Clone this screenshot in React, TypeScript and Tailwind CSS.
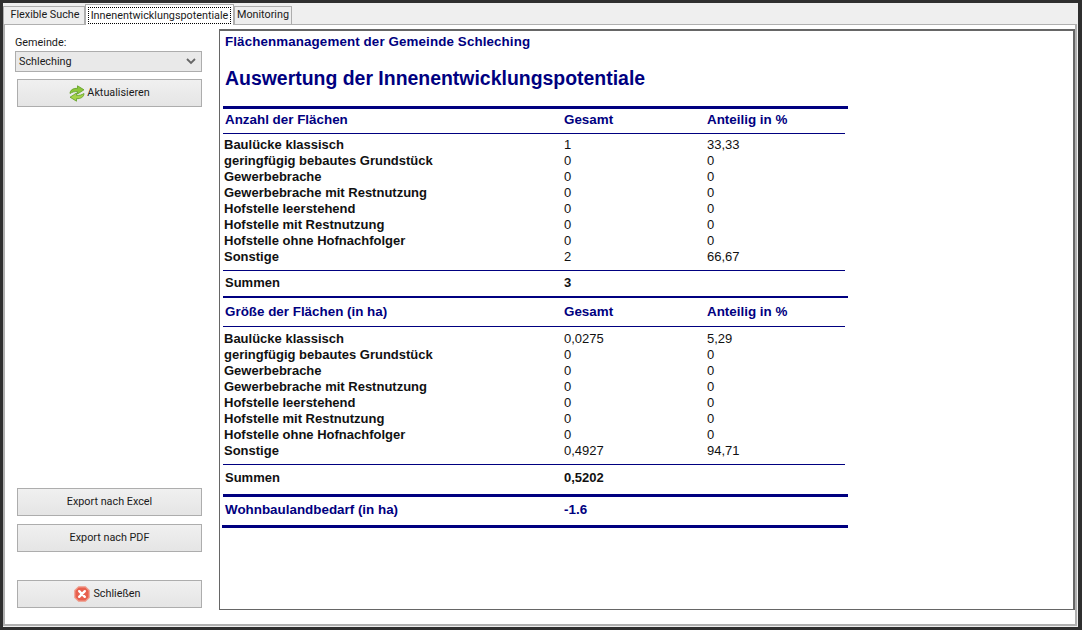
const ROW_LABELS = [
  "Baulücke klassisch",
  "geringfügig bebautes Grundstück",
  "Gewerbebrache",
  "Gewerbebrache mit Restnutzung",
  "Hofstelle leerstehend",
  "Hofstelle mit Restnutzung",
  "Hofstelle ohne Hofnachfolger",
  "Sonstige",
];

const COUNT_VALUES = [
  ["1", "33,33"],
  ["0", "0"],
  ["0", "0"],
  ["0", "0"],
  ["0", "0"],
  ["0", "0"],
  ["0", "0"],
  ["2", "66,67"],
];

const SIZE_VALUES = [
  ["0,0275", "5,29"],
  ["0", "0"],
  ["0", "0"],
  ["0", "0"],
  ["0", "0"],
  ["0", "0"],
  ["0", "0"],
  ["0,4927", "94,71"],
];

function RefreshIcon() {
  return (
    <svg width="16" height="17" viewBox="0 0 16 17" className="shrink-0">
      <path d="M1 8.5 C1 5 4.5 3 8.5 3.4 L8.5 0.8 L15 4.8 L8.5 9 L8.5 6.6 C5.5 6.4 3.5 7 1 8.5 Z" fill="#8cc63a" stroke="#5f9e25" strokeWidth="0.8" strokeLinejoin="round" />
      <path d="M15 8.5 C15 12 11.5 14 7.5 13.6 L7.5 16.2 L1 12.2 L7.5 8 L7.5 10.4 C10.5 10.6 12.5 10 15 8.5 Z" fill="#a5d34a" stroke="#5f9e25" strokeWidth="0.8" strokeLinejoin="round" />
    </svg>
  );
}

function CloseIcon() {
  return (
    <svg width="16" height="16" viewBox="0 0 16 16" className="shrink-0">
      <path d="M4.5 0.8 H11.5 L15.2 4.5 V11.5 L11.5 15.2 H4.5 L0.8 11.5 V4.5 Z" fill="#e8604e" stroke="#f0a090" strokeWidth="1.2" strokeLinejoin="round" />
      <path d="M5.2 5.2 L10.8 10.8 M10.8 5.2 L5.2 10.8" stroke="#ffffff" strokeWidth="2.4" strokeLinecap="round" />
    </svg>
  );
}

function WinButton({ children, className = "" }: { children: React.ReactNode; className?: string }) {
  return (
    <button
      type="button"
      className={`ml-[2px] flex w-[185px] items-center justify-center gap-[2px] border border-[#adadad] bg-gradient-to-b from-[#f0f0f0] to-[#e5e5e5] text-[10.8px] text-[#1a1a1a] ${className}`}
    >
      {children}
    </button>
  );
}

function HeaderRow({ title }: { title: string }) {
  return (
    <div className="grid grid-cols-[339px_143px_1fr] pl-[2px] text-[13.4px] leading-[16px] font-bold text-[#000080]">
      <div>{title}</div>
      <div>Gesamt</div>
      <div>Anteilig in %</div>
    </div>
  );
}

function DataRows({ values }: { values: string[][] }) {
  return (
    <div>
      {ROW_LABELS.map((label, i) => (
        <div key={label} className="grid h-[16px] grid-cols-[340px_143px_1fr] pl-[1px] text-[13px] leading-[16px] text-[#111]">
          <div className="font-bold">{label}</div>
          <div>{values[i][0]}</div>
          <div>{values[i][1]}</div>
        </div>
      ))}
    </div>
  );
}

export default function App() {
  return (
    <div className="h-[630px] w-[1082px] overflow-hidden bg-[#2f2f2f] pt-[3px] pr-[4px] pb-[3px] pl-[3px] font-['Roboto',sans-serif]">
      <div className="flex h-full flex-col bg-[#efefef] pr-px pb-px">
        {/* tab strip */}
        <div className="flex h-[21px] items-end text-[10.8px] text-[#1a1a1a]">
          <div className="flex h-[18px] w-[82px] items-center justify-center border border-b-0 border-[#adadad] bg-[#eeeeee] pl-[2px]">
            Flexible Suche
          </div>
          <div className="relative z-10 -mb-px flex h-[21px] w-[149px] items-center justify-center border border-b-0 border-[#adadad] bg-white">
            <span className="w-[143px] border border-dotted border-black text-center leading-[15px]">Innenentwicklungspotentiale</span>
          </div>
          <div className="flex h-[18px] w-[58px] items-center justify-center border border-b-0 border-[#adadad] bg-[#eeeeee]">
            Monitoring
          </div>
        </div>

        {/* tab page */}
        <div className="flex min-h-0 flex-1 border-2 border-t-[1px] border-[#b0b0b0] bg-white">
          <aside className="flex w-[214px] shrink-0 flex-col pt-[10px] pb-[16px] pl-[10px] text-[10.8px] text-[#1a1a1a]">
            <label className="h-[14px] leading-[15px]">Gemeinde:</label>
            <div className="mt-[2px] flex h-[21px] w-[187px] items-center justify-between border border-[#adadad] bg-[#e9e9e9] pr-[5px] pl-[3px]">
              <span className="pt-[2px]">Schleching</span>
              <svg width="10" height="7" viewBox="0 0 10 7" fill="none" stroke="#666" strokeWidth="1.8">
                <path d="M1 1 L5 5 L9 1" />
              </svg>
            </div>
            <WinButton className="mt-[7px] h-[28px]">
              <RefreshIcon />
              <span className="pt-[1px]">Aktualisieren</span>
            </WinButton>
            <div className="flex-1" />
            <WinButton className="h-[28px]">Export nach Excel</WinButton>
            <WinButton className="mt-[8px] h-[28px]">Export nach PDF</WinButton>
            <WinButton className="mt-[28px] h-[28px] gap-[3px] pr-[4px]">
              <CloseIcon />
              <span>Schließen</span>
            </WinButton>
          </aside>

          <main className="mt-[4px] mb-[14px] flex-1 border border-t-2 border-r-2 border-[#666] bg-white pl-[3px] font-['Liberation_Sans',Arial,sans-serif]">
            <div className="w-[625px]">
              <h2 className="mt-[3px] pl-[2px] text-[13.35px] leading-[16px] font-bold tracking-[0.12px] text-[#000080]">
                Flächenmanagement der Gemeinde Schleching
              </h2>
              <h1 className="mt-[16px] pl-[2px] text-[19.45px] leading-[24px] font-bold text-[#000080]">
                Auswertung der Innenentwicklungspotentiale
              </h1>

              <div className="mt-[16px] border-t-[3px] border-[#000080] pt-[3px]">
                <HeaderRow title="Anzahl der Flächen" />
              </div>
              <div className="mt-[5px] w-[622px] border-t border-[#000080] pt-[3px]">
                <DataRows values={COUNT_VALUES} />
              </div>
              <div className="mt-[5px] grid w-[622px] grid-cols-[339px_143px_1fr] border-t border-[#000080] pt-[4px] pl-[2px] text-[13px] leading-[16px] font-bold text-[#111]">
                <div>Summen</div>
                <div>3</div>
              </div>
              <div className="mt-[5px] border-t-[2px] border-[#000080] pt-[6px]">
                <HeaderRow title="Größe der Flächen (in ha)" />
              </div>
              <div className="mt-[6px] w-[622px] border-t border-[#000080] pt-[4px]">
                <DataRows values={SIZE_VALUES} />
              </div>
              <div className="mt-[5px] grid w-[622px] grid-cols-[339px_143px_1fr] border-t border-[#000080] pt-[5px] pl-[2px] text-[13px] leading-[16px] font-bold text-[#111]">
                <div>Summen</div>
                <div>0,5202</div>
              </div>
              <div className="mt-[8px] border-t-[3px] border-[#000080] pt-[5px]">
                <div className="grid grid-cols-[339px_143px_1fr] pl-[2px] text-[13.4px] leading-[16px] font-bold text-[#000080]">
                  <div>Wohnbaulandbedarf (in ha)</div>
                  <div>-1.6</div>
                </div>
              </div>
              <div className="mt-[7px] -ml-px border-t-[3px] border-[#000080]" />
            </div>
          </main>
        </div>
      </div>
    </div>
  );
}
